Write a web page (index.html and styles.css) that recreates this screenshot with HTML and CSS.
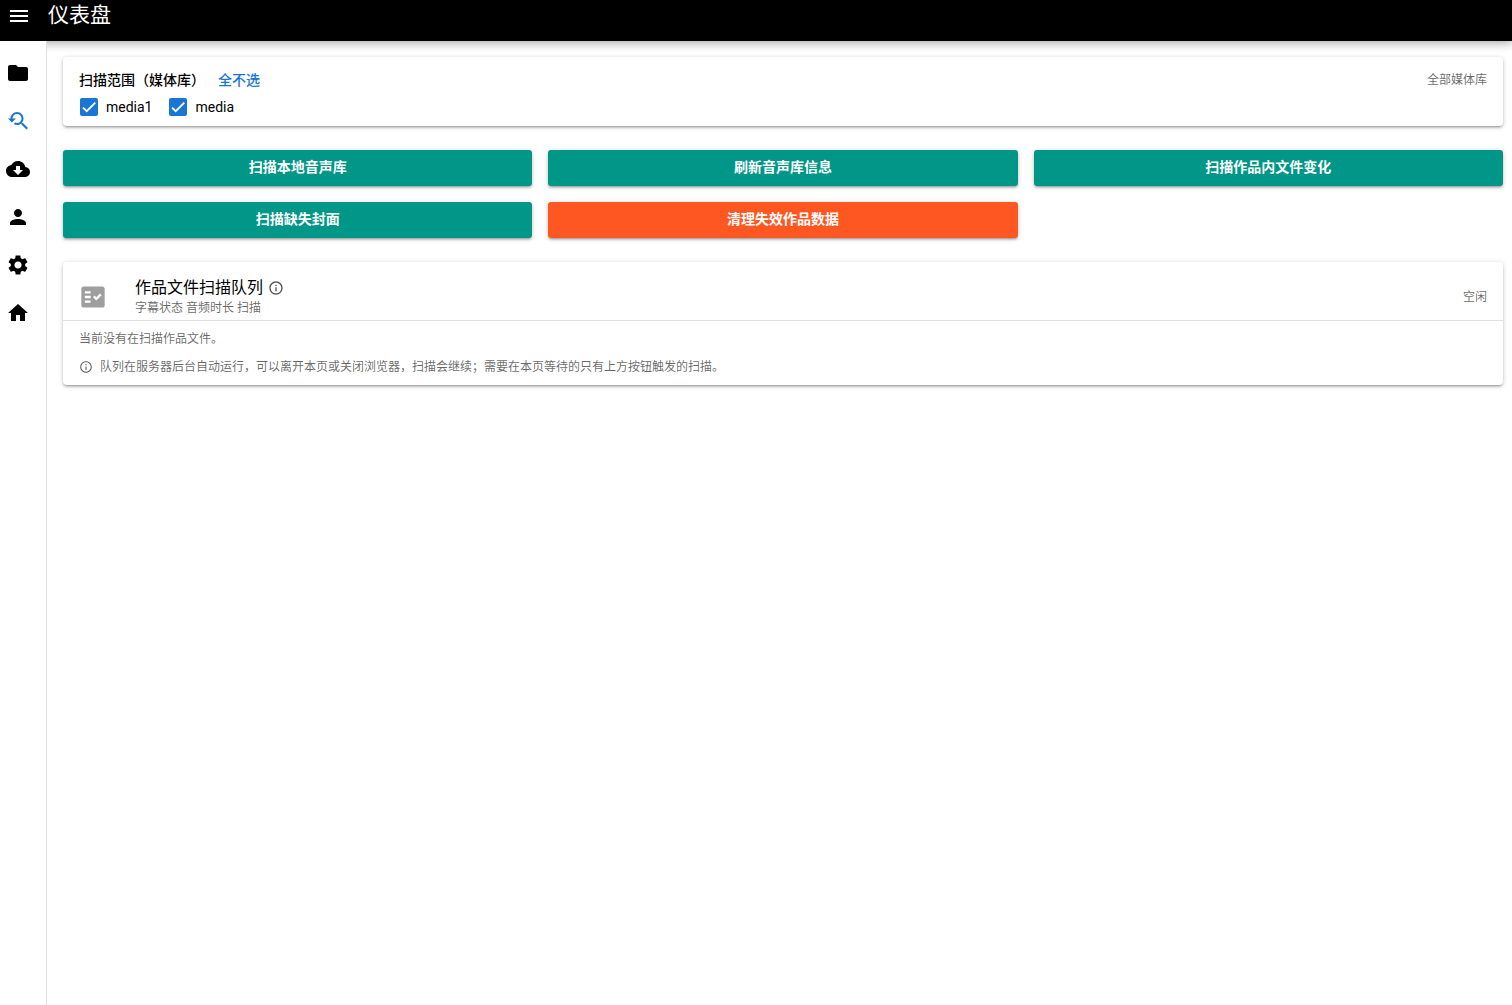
FILE: index.html
```html
<!DOCTYPE html>
<html lang="zh-CN">
<head>
<meta charset="utf-8">
<meta name="viewport" content="width=device-width, initial-scale=1">
<title>仪表盘</title>
<link rel="stylesheet" href="styles.css">
</head>
<body>
<header class="toolbar">
  <button class="menu-button" type="button" aria-label="菜单">
    <svg class="icon" viewBox="0 0 24 24"><path d="M3 18h18v-2H3v2zm0-5h18v-2H3v2zm0-7v2h18V6H3z"/></svg>
  </button>
  <h1 class="toolbar-title">仪表盘</h1>
</header>
<div class="layout">
  <nav class="sidebar">
    <a class="nav-link" href="#folder" aria-label="文件夹"><svg class="icon" viewBox="0 0 24 24"><path d="M10 4H4c-1.100 0-1.990.9-1.990 2L2 18c0 1.100.9 2 2 2h16c1.100 0 2-.9 2-2V8c0-1.100-.9-2-2-2h-8l-2-2z"/></svg></a>
    <a class="nav-link active" href="#scan" aria-label="扫描"><svg class="icon" viewBox="0 0 24 24"><path d="M17.010 14h-.8l-.27-.27c.98-1.140 1.570-2.610 1.570-4.230 0-3.590-2.910-6.500-6.500-6.500s-6.500 3-6.500 6.500H2l3.840 4 4.160-4H6.510C6.510 7 8.530 5 11.010 5s4.500 2.010 4.500 4.500c0 2.480-2.020 4.500-4.500 4.500-.65 0-1.260-.14-1.820-.38L7.710 15.100c.97.57 2.090.9 3.300.9 1.610 0 3.080-.59 4.220-1.570l.27.27v.79l5.010 4.990L22 19l-4.990-5z"/></svg></a>
    <a class="nav-link" href="#download" aria-label="下载"><svg class="icon" viewBox="0 0 24 24"><path d="M19.350 10.040C18.670 6.590 15.640 4 12 4 9.110 4 6.600 5.640 5.350 8.040 2.340 8.360 0 10.910 0 14c0 3.310 2.690 6 6 6h13c2.760 0 5-2.240 5-5 0-2.640-2.050-4.780-4.650-4.960zM17 13l-5 5-5-5h3V9h4v4h3z"/></svg></a>
    <a class="nav-link" href="#user" aria-label="用户"><svg class="icon" viewBox="0 0 24 24"><path d="M12 12c2.210 0 4-1.790 4-4s-1.790-4-4-4-4 1.790-4 4 1.790 4 4 4zm0 2c-2.670 0-8 1.340-8 4v2h16v-2c0-2.660-5.330-4-8-4z"/></svg></a>
    <a class="nav-link" href="#settings" aria-label="设置"><svg class="icon" viewBox="0 0 24 24"><path d="M19.140 12.940c.04-.3.06-.61.06-.94 0-.32-.02-.64-.07-.94l2.030-1.580c.18-.14.23-.41.12-.61l-1.920-3.320c-.12-.22-.37-.29-.59-.22l-2.390.96c-.5-.38-1.030-.7-1.620-.94l-.36-2.540c-.04-.24-.24-.41-.48-.41h-3.840c-.24 0-.43.17-.47.41l-.36 2.540c-.59.24-1.130.57-1.620.94l-2.390-.96c-.22-.08-.47 0-.59.22L2.740 8.870c-.12.21-.08.47.12.61l2.030 1.580c-.05.3-.09.63-.09.94s.02.64.07.94l-2.030 1.580c-.18.14-.23.41-.12.61l1.920 3.320c.12.22.37.29.59.22l2.390-.96c.5.38 1.030.7 1.620.94l.36 2.540c.05.24.24.41.48.41h3.840c.24 0 .44-.17.47-.41l.36-2.540c.59-.24 1.130-.56 1.620-.94l2.390.96c.22.08.47 0 .59-.22l1.920-3.320c.12-.22.07-.47-.12-.61l-2.010-1.580zM12 15.600c-1.980 0-3.600-1.620-3.600-3.600s1.620-3.600 3.600-3.600 3.600 1.620 3.600 3.600-1.620 3.600-3.600 3.600z"/></svg></a>
    <a class="nav-link" href="#home" aria-label="首页"><svg class="icon" viewBox="0 0 24 24"><path d="M10 20v-6h4v6h5v-8h3L12 3 2 12h3v8z"/></svg></a>
  </nav>
  <main class="content">
    <section class="card scope">
      <div class="scope-head">
        <h2 class="scope-title">扫描范围（媒体库）</h2>
        <button class="link-button" type="button">全不选</button>
        <span class="caption push">全部媒体库</span>
      </div>
      <div class="scope-options">
        <label class="option"><input class="checkbox" type="checkbox" checked>media1</label>
        <label class="option"><input class="checkbox" type="checkbox" checked>media</label>
      </div>
    </section>
    <div class="actions">
      <button class="action" type="button">扫描本地音声库</button>
      <button class="action" type="button">刷新音声库信息</button>
      <button class="action" type="button">扫描作品内文件变化</button>
      <button class="action" type="button">扫描缺失封面</button>
      <button class="action danger" type="button">清理失效作品数据</button>
    </div>
    <section class="card">
      <div class="queue-head">
        <svg class="icon queue-icon" viewBox="0 0 24 24"><path fill-rule="evenodd" d="M20 3H4c-1.100 0-2 .9-2 2v14c0 1.100.9 2 2 2h16c1.100 0 2-.9 2-2V5c0-1.100-.9-2-2-2zM10 17H5v-2h5v2zm0-4H5v-2h5v2zm0-4H5V7h5v2zm4.820 6L12 12.160l1.410-1.410 1.410 1.420L17.990 9l1.420 1.420L14.820 15z"/></svg>
        <div>
          <h2 class="queue-title">作品文件扫描队列
            <svg class="icon info" viewBox="0 0 24 24"><path d="M11 7h2v2h-2zm0 4h2v6h-2zm1-9C6.480 2 2 6.480 2 12s4.480 10 10 10 10-4.480 10-10S17.520 2 12 2zm0 18c-4.410 0-8-3.590-8-8s3.590-8 8-8 8 3.590 8 8-3.590 8-8 8z"/></svg>
          </h2>
          <p class="caption">字幕状态 音频时长 扫描</p>
        </div>
        <span class="caption push">空闲</span>
      </div>
      <div class="queue-body">
        <p class="caption">当前没有在扫描作品文件。</p>
        <p class="caption note">
          <svg class="icon info-small" viewBox="0 0 24 24"><path d="M11 7h2v2h-2zm0 4h2v6h-2zm1-9C6.480 2 2 6.480 2 12s4.480 10 10 10 10-4.480 10-10S17.520 2 12 2zm0 18c-4.410 0-8-3.590-8-8s3.590-8 8-8 8 3.590 8 8-3.590 8-8 8z"/></svg>
          <span>队列在服务器后台自动运行，可以离开本页或关闭浏览器，扫描会继续；需要在本页等待的只有上方按钮触发的扫描。</span>
        </p>
      </div>
    </section>
  </main>
</div>
</body>
</html>
```

FILE: styles.css
```css
* {
  box-sizing: border-box;
}

body {
  display: flex;
  flex-direction: column;
  min-height: 100vh;
  margin: 0;
  background: #fff;
  color: #000;
  font: 14px/20px Roboto, "Noto Sans CJK SC", sans-serif;
}

h1, h2, p {
  margin: 0;
}

button {
  padding: 0;
  border: 0;
  background: none;
  color: inherit;
  font: inherit;
  cursor: pointer;
}

.icon {
  display: block;
  flex: none;
  width: 24px;
  height: 24px;
  fill: currentColor;
}

.toolbar {
  display: flex;
  align-items: flex-start;
  gap: 17px;
  padding: 0 7px 11px;
  background: #000;
  color: #fff;
  box-shadow: 0 0 10px 2px rgba(0, 0, 0, .2), 0 0 10px rgba(0, 0, 0, .24);
}

.menu-button {
  padding-top: 4px;
}

.toolbar-title {
  font-size: 21px;
  font-weight: 400;
  line-height: 30px;
}

.layout {
  display: flex;
  flex: 1;
}

.sidebar {
  flex: none;
  width: 47px;
  padding-top: 8px;
  border-right: 1px solid #e0e0e0;
  background: #fff;
  position: relative;
}

.nav-link {
  display: flex;
  align-items: center;
  height: 48px;
  padding-left: 6px;
  color: #000;
}

.nav-link.active {
  color: #1976d2;
}

.content {
  display: flex;
  flex: 1;
  flex-direction: column;
  gap: 24px;
  min-width: 0;
  padding: 16px 9px 16px 16px;
}

.card {
  border-radius: 4px;
  background: #fff;
  box-shadow: 0 1px 5px rgba(0, 0, 0, .2), 0 2px 2px rgba(0, 0, 0, .14), 0 3px 1px -2px rgba(0, 0, 0, .12);
}

.scope {
  padding: 12px 16px 9px;
}

.scope-head {
  display: flex;
  align-items: center;
  gap: 13px;
}

.scope-title {
  font-size: 14px;
  font-weight: 500;
  line-height: 22px;
}

.link-button {
  color: #1976d2;
  font-weight: 500;
}

.scope-options {
  display: flex;
  gap: 16px;
  padding-top: 6px;
}

.option {
  display: flex;
  align-items: center;
  gap: 8px;
}

.checkbox {
  appearance: none;
  width: 18px;
  height: 18px;
  margin: 0 0 0 1px;
  border-radius: 2px;
  background: #1976d2 url("data:image/svg+xml,%3Csvg xmlns='http://www.w3.org/2000/svg' viewBox='0 0 24 24'%3E%3Cpath d='M1.730 12.910 8.100 19.280 22.790 4.590' fill='none' stroke='white' stroke-width='3.120'/%3E%3C/svg%3E") center / 14px no-repeat;
}

.caption {
  color: rgba(0, 0, 0, .6);
  font-size: 12px;
  line-height: 20px;
}

.push {
  margin-left: auto;
}

.actions {
  display: grid;
  grid-template-columns: repeat(3, 1fr);
  gap: 16px;
}

.action {
  height: 36px;
  padding-bottom: 2px;
  border-radius: 3px;
  background: #009688;
  box-shadow: 0 1px 5px rgba(0, 0, 0, .2), 0 2px 2px rgba(0, 0, 0, .14), 0 3px 1px -2px rgba(0, 0, 0, .12);
  color: #fff;
  font-weight: 700;
}

.danger {
  background: #ff5722;
}

.queue-head {
  display: flex;
  align-items: center;
  padding: 14px 16px 2px;
  border-bottom: 1px solid #e0e0e0;
}

.queue-icon {
  width: 28px;
  height: 28px;
  margin-right: 28px;
  color: #9e9e9e;
}

.queue-title {
  display: flex;
  align-items: center;
  gap: 5px;
  padding-top: 1px;
  font-size: 16px;
  font-weight: 400;
  line-height: 22px;
}

.queue-title + .caption {
  line-height: 19px;
}

.info {
  width: 16px;
  height: 16px;
  color: #555;
}

.queue-body {
  display: grid;
  gap: 8px;
  padding: 8px 16px;
}

.note {
  display: flex;
  align-items: center;
  gap: 7px;
}

.info-small {
  width: 14px;
  height: 14px;
}
```
